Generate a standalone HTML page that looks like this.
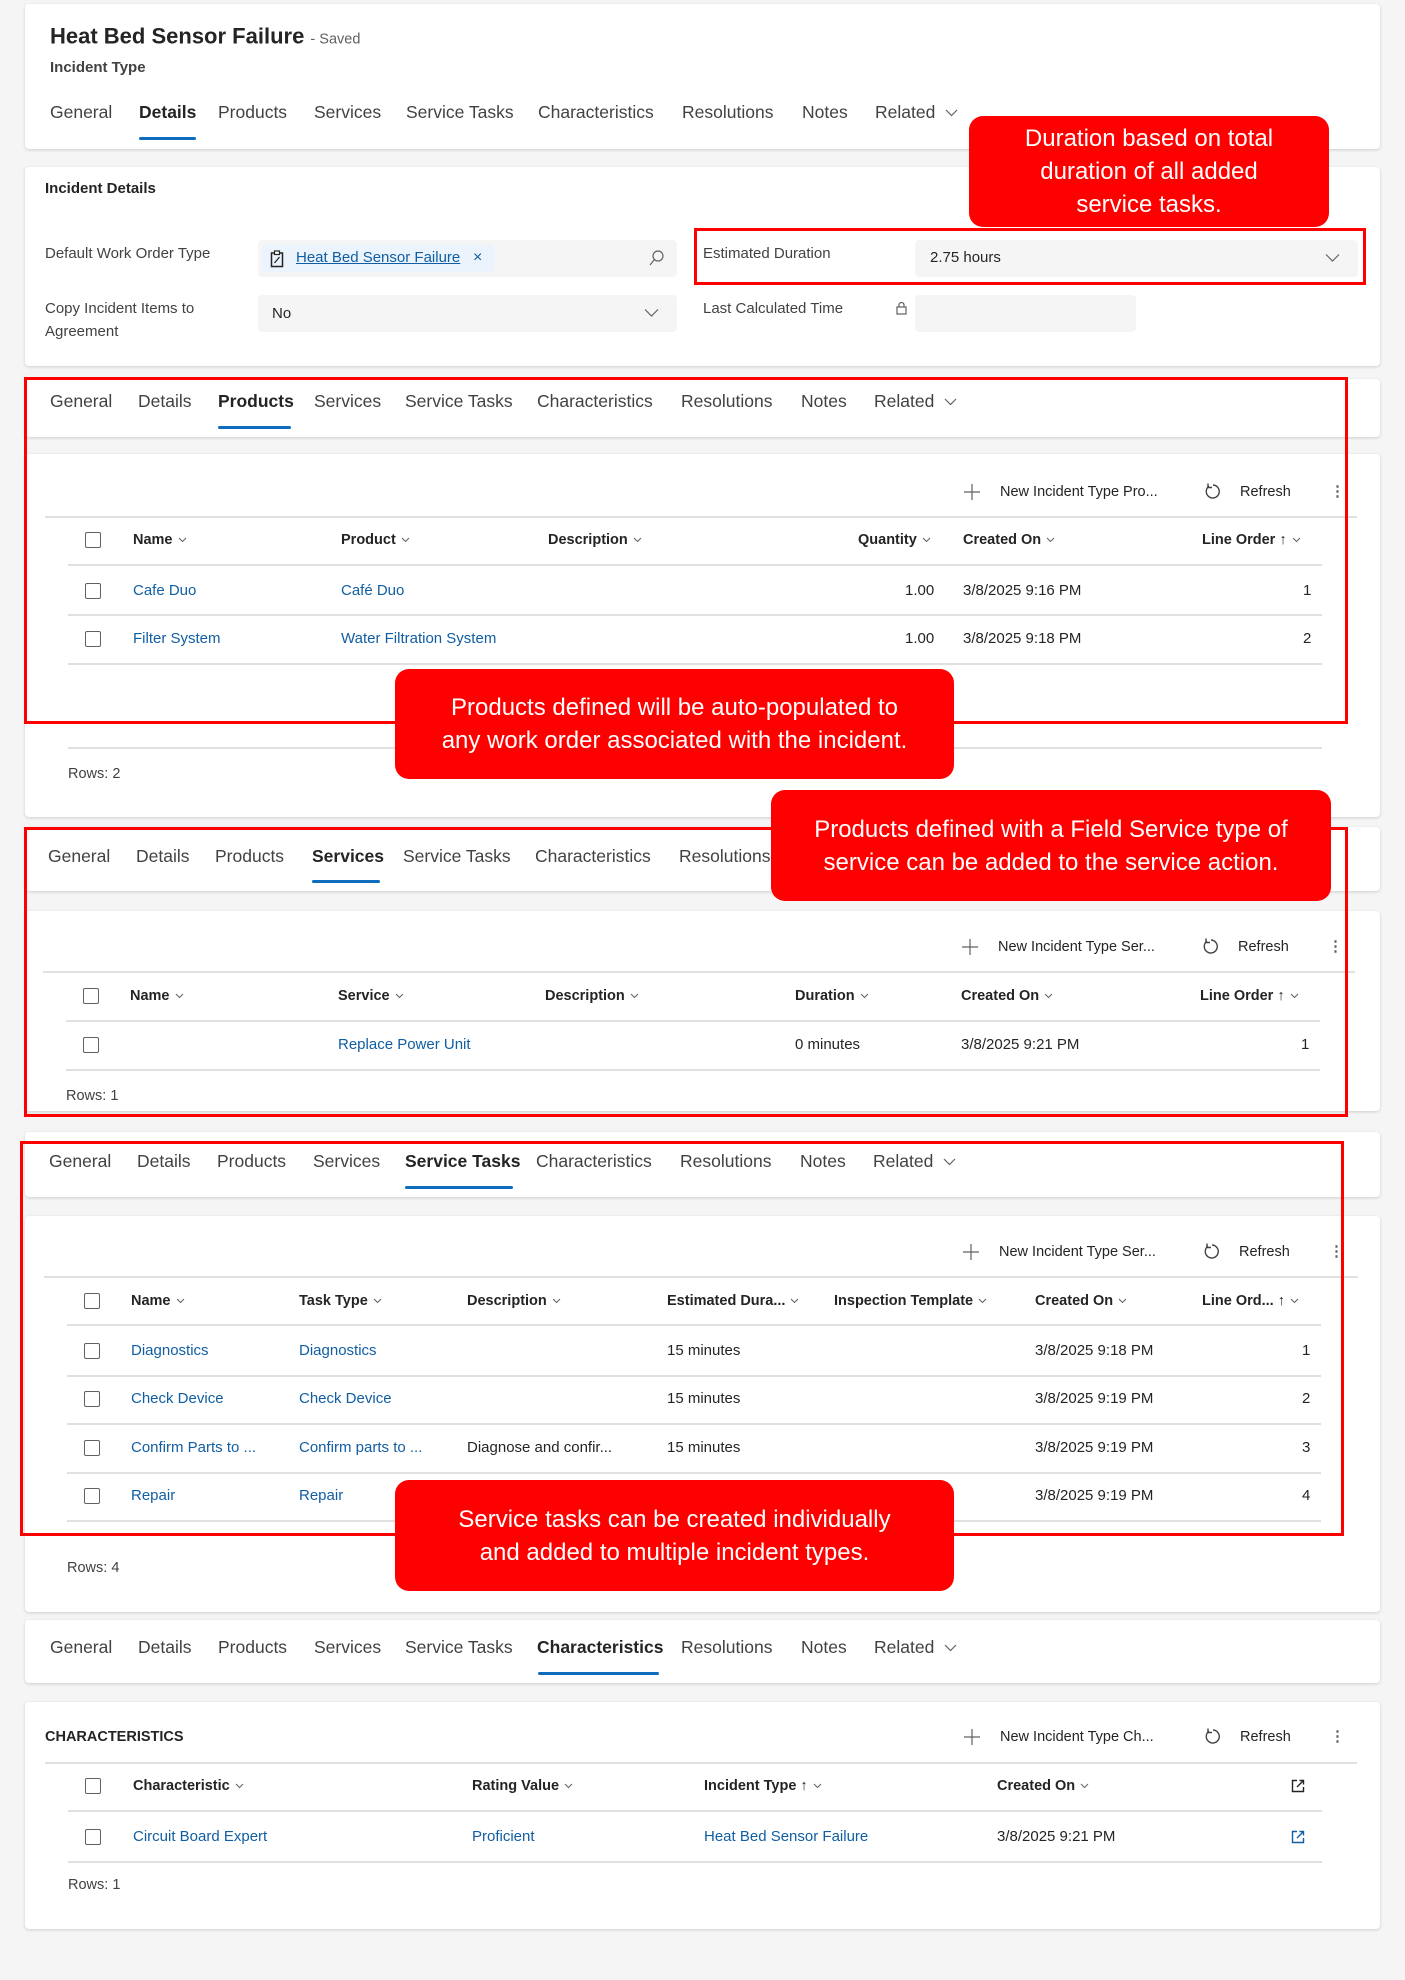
<!DOCTYPE html>
<html><head><meta charset="utf-8"><style>
*{margin:0;padding:0;box-sizing:border-box}
body{width:1405px;height:1980px;background:#f5f5f5;position:relative;font-family:"Liberation Sans",Arial,sans-serif;color:#242424;overflow:hidden}
.c{position:absolute;background:#fff;border-radius:4px;box-shadow:0 1px 3px rgba(0,0,0,.16)}
.t{position:absolute;white-space:nowrap;transform:translateY(-50%);font-size:15px;line-height:20px}
.tab{font-size:17.5px;color:#424242}
.act{font-weight:bold;color:#242424}
.ul{position:absolute;height:3px;background:#0f6cbd;border-radius:2px}
.h{font-weight:bold;font-size:14.5px}
.l{color:#115ea3}
.ln{position:absolute;height:1px;background:#e0e0e0}
.cb{position:absolute;width:16px;height:16px;border:1px solid #616161;border-radius:2px;transform:translateY(-50%)}
.rb{position:absolute;border:3px solid #f00}
.co{position:absolute;background:#f00;color:#fff;border-radius:14px;font-size:24px;line-height:33px;text-align:center;display:flex;flex-direction:column;justify-content:center}
.fb{position:absolute;background:#f5f5f5;border-radius:4px}
.cv{margin-left:5px;vertical-align:middle}
.small{font-size:14.5px}
</style></head><body>

<!-- Card 1 header -->
<div class="c" style="left:25px;top:4px;width:1355px;height:145px"></div>
<div class="t" style="left:50px;top:38px;font-size:22px;font-weight:bold;color:#242424">Heat Bed Sensor Failure <span style="font-size:14.5px;font-weight:normal;color:#616161">- Saved</span></div>
<div class="t" style="left:50px;top:68px;font-size:15px;font-weight:bold;color:#424242">Incident Type</div>

<div class="t tab" style="left:50px;top:112px">General</div>
<div class="t tab act" style="left:139px;top:112px">Details</div>
<div class="t tab" style="left:218px;top:112px">Products</div>
<div class="t tab" style="left:314px;top:112px">Services</div>
<div class="t tab" style="left:406px;top:112px">Service Tasks</div>
<div class="t tab" style="left:538px;top:112px">Characteristics</div>
<div class="t tab" style="left:682px;top:112px">Resolutions</div>
<div class="t tab" style="left:802px;top:112px">Notes</div>
<div class="t tab" style="left:875px;top:112px">Related <svg class="cv" width="13" height="8"><path d="M1 1l5.5 5.5L12 1" stroke="#616161" fill="none" stroke-width="1.2"/></svg></div>
<div class="ul" style="left:139px;top:137px;width:57px"></div>

<!-- Card 2 details -->
<div class="c" style="left:25px;top:167px;width:1355px;height:199px"></div>
<div class="t" style="left:45px;top:189px;font-size:15px;font-weight:bold">Incident Details</div>
<div class="t" style="left:45px;top:254px;color:#424242">Default Work Order Type</div>
<div class="fb" style="left:258px;top:240px;width:419px;height:37px"></div>
<div style="position:absolute;left:262px;top:245px;width:232px;height:27px;background:#ebf3fc;border-radius:3px"></div>
<svg style="position:absolute;left:270px;top:250px" width="14" height="18"><rect x="1.5" y="3" width="11" height="13.5" fill="none" stroke="#242424" stroke-width="1.5"/><rect x="4.5" y="1" width="5" height="3.5" fill="#fff" stroke="#242424" stroke-width="1.2"/><path d="M4.5 13l5-6" stroke="#242424" stroke-width="1.3"/></svg>
<div class="t l" style="left:296px;top:258px;text-decoration:underline">Heat Bed Sensor Failure</div>
<div class="t" style="left:473px;top:258px;color:#115ea3;font-size:16px">×</div>
<svg style="position:absolute;left:648px;top:249px" width="16" height="18"><circle cx="10" cy="7" r="5" fill="none" stroke="#616161" stroke-width="1.2"/><path d="M6.5 10.5L2 16" stroke="#616161" stroke-width="1.2"/></svg>

<div class="t" style="left:45px;top:309px;color:#424242">Copy Incident Items to</div>
<div class="t" style="left:45px;top:332px;color:#424242">Agreement</div>
<div class="fb" style="left:258px;top:295px;width:419px;height:37px"></div>
<div class="t" style="left:272px;top:314px">No</div>
<svg style="position:absolute;left:644px;top:308px" width="15" height="10"><path d="M1 1.5l6.5 6.5L14 1.5" stroke="#616161" fill="none" stroke-width="1.2"/></svg>

<div class="t" style="left:703px;top:254px;color:#424242">Estimated Duration</div>
<div class="fb" style="left:915px;top:240px;width:443px;height:37px"></div>
<div class="t" style="left:930px;top:258px">2.75 hours</div>
<svg style="position:absolute;left:1325px;top:253px" width="15" height="10"><path d="M1 1.5l6.5 6.5L14 1.5" stroke="#616161" fill="none" stroke-width="1.2"/></svg>
<div class="rb" style="left:694px;top:228px;width:672px;height:57px"></div>

<div class="t" style="left:703px;top:309px;color:#424242">Last Calculated Time</div>
<svg style="position:absolute;left:896px;top:301px" width="11" height="14"><rect x="1" y="6" width="9" height="7" fill="none" stroke="#616161" stroke-width="1.2"/><path d="M3 6V4a2.5 2.5 0 015 0v2" fill="none" stroke="#616161" stroke-width="1.2"/></svg>
<div class="fb" style="left:915px;top:295px;width:221px;height:37px"></div>

<div class="co" style="left:969px;top:116px;width:360px;height:111px"><div>Duration based on total</div><div>duration of all added</div><div>service tasks.</div></div>

<!-- Products tabs -->
<div class="c" style="left:25px;top:379px;width:1355px;height:58px"></div>
<div class="t tab" style="left:50px;top:401px">General</div>
<div class="t tab" style="left:138px;top:401px">Details</div>
<div class="t tab act" style="left:218px;top:401px">Products</div>
<div class="t tab" style="left:314px;top:401px">Services</div>
<div class="t tab" style="left:405px;top:401px">Service Tasks</div>
<div class="t tab" style="left:537px;top:401px">Characteristics</div>
<div class="t tab" style="left:681px;top:401px">Resolutions</div>
<div class="t tab" style="left:801px;top:401px">Notes</div>
<div class="t tab" style="left:874px;top:401px">Related <svg class="cv" width="13" height="8"><path d="M1 1l5.5 5.5L12 1" stroke="#616161" fill="none" stroke-width="1.2"/></svg></div>
<div class="ul" style="left:218px;top:426px;width:73px"></div>

<!-- Products grid -->
<div class="c" style="left:25px;top:454px;width:1355px;height:363px"></div>
<svg style="position:absolute;left:964px;top:484px" width="16" height="16"><path d="M8 0v16M0 8h16" stroke="#616161" stroke-width="1.2"/></svg>
<div class="t small" style="left:1000px;top:492px">New Incident Type Pro...</div>
<svg style="position:absolute;left:1204px;top:483px" width="17" height="17"><path d="M5 3.2A6.5 6.5 0 1 0 9 2" fill="none" stroke="#424242" stroke-width="1.4"/><path d="M4 0.5v4h4" fill="none" stroke="#424242" stroke-width="1.4"/></svg>
<div class="t small" style="left:1240px;top:492px">Refresh</div>
<div class="t" style="left:1330px;top:492px;font-weight:bold;color:#616161">⋮</div>
<div class="ln" style="left:45px;top:516px;width:1312px;height:2px"></div>
<div class="cb" style="left:85px;top:540px"></div>
<div class="t h" style="left:133px;top:540px">Name<svg class="cv" width="9" height="6"><path d="M1 1l3.5 3.5L8 1" stroke="#616161" fill="none"/></svg></div>
<div class="t h" style="left:341px;top:540px">Product<svg class="cv" width="9" height="6"><path d="M1 1l3.5 3.5L8 1" stroke="#616161" fill="none"/></svg></div>
<div class="t h" style="left:548px;top:540px">Description<svg class="cv" width="9" height="6"><path d="M1 1l3.5 3.5L8 1" stroke="#616161" fill="none"/></svg></div>
<div class="t h" style="left:858px;top:540px">Quantity<svg class="cv" width="9" height="6"><path d="M1 1l3.5 3.5L8 1" stroke="#616161" fill="none"/></svg></div>
<div class="t h" style="left:963px;top:540px">Created On<svg class="cv" width="9" height="6"><path d="M1 1l3.5 3.5L8 1" stroke="#616161" fill="none"/></svg></div>
<div class="t h" style="left:1202px;top:540px">Line Order <span style="font-weight:normal">↑</span><svg class="cv" width="9" height="6"><path d="M1 1l3.5 3.5L8 1" stroke="#616161" fill="none"/></svg></div>
<div class="ln" style="left:68px;top:564px;width:1254px;height:2px"></div>
<div class="cb" style="left:85px;top:591px"></div>
<div class="t l" style="left:133px;top:591px">Cafe Duo</div>
<div class="t l" style="left:341px;top:591px">Café Duo</div>
<div class="t" style="left:905px;top:591px">1.00</div>
<div class="t" style="left:963px;top:591px">3/8/2025 9:16 PM</div>
<div class="t" style="left:1303px;top:591px">1</div>
<div class="ln" style="left:68px;top:614px;width:1254px;height:2px"></div>
<div class="cb" style="left:85px;top:639px"></div>
<div class="t l" style="left:133px;top:639px">Filter System</div>
<div class="t l" style="left:341px;top:639px">Water Filtration System</div>
<div class="t" style="left:905px;top:639px">1.00</div>
<div class="t" style="left:963px;top:639px">3/8/2025 9:18 PM</div>
<div class="t" style="left:1303px;top:639px">2</div>
<div class="ln" style="left:68px;top:663px;width:1254px;height:2px"></div>
<div class="ln" style="left:68px;top:747px;width:1254px;height:2px"></div>
<div class="t small" style="left:68px;top:774px;color:#424242">Rows: 2</div>
<div class="rb" style="left:24px;top:377px;width:1324px;height:347px"></div>
<div class="co" style="left:395px;top:669px;width:559px;height:110px"><div>Products defined will be auto-populated to</div><div>any work order associated with the incident.</div></div>

<!-- Services tabs -->
<div class="c" style="left:25px;top:827px;width:1355px;height:64px"></div>
<div class="t tab" style="left:48px;top:856px">General</div>
<div class="t tab" style="left:136px;top:856px">Details</div>
<div class="t tab" style="left:215px;top:856px">Products</div>
<div class="t tab act" style="left:312px;top:856px">Services</div>
<div class="t tab" style="left:403px;top:856px">Service Tasks</div>
<div class="t tab" style="left:535px;top:856px">Characteristics</div>
<div class="t tab" style="left:679px;top:856px">Resolutions</div>
<div class="ul" style="left:312px;top:880px;width:68px"></div>

<!-- Services grid -->
<div class="c" style="left:25px;top:911px;width:1355px;height:200px"></div>
<svg style="position:absolute;left:962px;top:939px" width="16" height="16"><path d="M8 0v16M0 8h16" stroke="#616161" stroke-width="1.2"/></svg>
<div class="t small" style="left:998px;top:947px">New Incident Type Ser...</div>
<svg style="position:absolute;left:1202px;top:938px" width="17" height="17"><path d="M5 3.2A6.5 6.5 0 1 0 9 2" fill="none" stroke="#424242" stroke-width="1.4"/><path d="M4 0.5v4h4" fill="none" stroke="#424242" stroke-width="1.4"/></svg>
<div class="t small" style="left:1238px;top:947px">Refresh</div>
<div class="t" style="left:1328px;top:947px;font-weight:bold;color:#616161">⋮</div>
<div class="ln" style="left:43px;top:971px;width:1312px;height:2px"></div>
<div class="cb" style="left:83px;top:996px"></div>
<div class="t h" style="left:130px;top:996px">Name<svg class="cv" width="9" height="6"><path d="M1 1l3.5 3.5L8 1" stroke="#616161" fill="none"/></svg></div>
<div class="t h" style="left:338px;top:996px">Service<svg class="cv" width="9" height="6"><path d="M1 1l3.5 3.5L8 1" stroke="#616161" fill="none"/></svg></div>
<div class="t h" style="left:545px;top:996px">Description<svg class="cv" width="9" height="6"><path d="M1 1l3.5 3.5L8 1" stroke="#616161" fill="none"/></svg></div>
<div class="t h" style="left:795px;top:996px">Duration<svg class="cv" width="9" height="6"><path d="M1 1l3.5 3.5L8 1" stroke="#616161" fill="none"/></svg></div>
<div class="t h" style="left:961px;top:996px">Created On<svg class="cv" width="9" height="6"><path d="M1 1l3.5 3.5L8 1" stroke="#616161" fill="none"/></svg></div>
<div class="t h" style="left:1200px;top:996px">Line Order <span style="font-weight:normal">↑</span><svg class="cv" width="9" height="6"><path d="M1 1l3.5 3.5L8 1" stroke="#616161" fill="none"/></svg></div>
<div class="ln" style="left:66px;top:1020px;width:1254px;height:2px"></div>
<div class="cb" style="left:83px;top:1045px"></div>
<div class="t l" style="left:338px;top:1045px">Replace Power Unit</div>
<div class="t" style="left:795px;top:1045px">0 minutes</div>
<div class="t" style="left:961px;top:1045px">3/8/2025 9:21 PM</div>
<div class="t" style="left:1301px;top:1045px">1</div>
<div class="ln" style="left:66px;top:1069px;width:1254px;height:2px"></div>
<div class="t small" style="left:66px;top:1096px;color:#424242">Rows: 1</div>
<div class="rb" style="left:24px;top:827px;width:1324px;height:290px"></div>
<div class="co" style="left:771px;top:790px;width:560px;height:111px"><div>Products defined with a Field Service type of</div><div>service can be added to the service action.</div></div>

<!-- Service tasks tabs -->
<div class="c" style="left:25px;top:1132px;width:1355px;height:65px"></div>
<div class="t tab" style="left:49px;top:1161px">General</div>
<div class="t tab" style="left:137px;top:1161px">Details</div>
<div class="t tab" style="left:217px;top:1161px">Products</div>
<div class="t tab" style="left:313px;top:1161px">Services</div>
<div class="t tab act" style="left:405px;top:1161px">Service Tasks</div>
<div class="t tab" style="left:536px;top:1161px">Characteristics</div>
<div class="t tab" style="left:680px;top:1161px">Resolutions</div>
<div class="t tab" style="left:800px;top:1161px">Notes</div>
<div class="t tab" style="left:873px;top:1161px">Related <svg class="cv" width="13" height="8"><path d="M1 1l5.5 5.5L12 1" stroke="#616161" fill="none" stroke-width="1.2"/></svg></div>
<div class="ul" style="left:405px;top:1186px;width:108px"></div>

<!-- Service tasks grid -->
<div class="c" style="left:25px;top:1216px;width:1355px;height:396px"></div>
<svg style="position:absolute;left:963px;top:1244px" width="16" height="16"><path d="M8 0v16M0 8h16" stroke="#616161" stroke-width="1.2"/></svg>
<div class="t small" style="left:999px;top:1252px">New Incident Type Ser...</div>
<svg style="position:absolute;left:1203px;top:1243px" width="17" height="17"><path d="M5 3.2A6.5 6.5 0 1 0 9 2" fill="none" stroke="#424242" stroke-width="1.4"/><path d="M4 0.5v4h4" fill="none" stroke="#424242" stroke-width="1.4"/></svg>
<div class="t small" style="left:1239px;top:1252px">Refresh</div>
<div class="t" style="left:1329px;top:1252px;font-weight:bold;color:#616161">⋮</div>
<div class="ln" style="left:44px;top:1276px;width:1314px;height:2px"></div>
<div class="cb" style="left:84px;top:1301px"></div>
<div class="t h" style="left:131px;top:1301px">Name<svg class="cv" width="9" height="6"><path d="M1 1l3.5 3.5L8 1" stroke="#616161" fill="none"/></svg></div>
<div class="t h" style="left:299px;top:1301px">Task Type<svg class="cv" width="9" height="6"><path d="M1 1l3.5 3.5L8 1" stroke="#616161" fill="none"/></svg></div>
<div class="t h" style="left:467px;top:1301px">Description<svg class="cv" width="9" height="6"><path d="M1 1l3.5 3.5L8 1" stroke="#616161" fill="none"/></svg></div>
<div class="t h" style="left:667px;top:1301px">Estimated Dura...<svg class="cv" width="9" height="6"><path d="M1 1l3.5 3.5L8 1" stroke="#616161" fill="none"/></svg></div>
<div class="t h" style="left:834px;top:1301px">Inspection Template<svg class="cv" width="9" height="6"><path d="M1 1l3.5 3.5L8 1" stroke="#616161" fill="none"/></svg></div>
<div class="t h" style="left:1035px;top:1301px">Created On<svg class="cv" width="9" height="6"><path d="M1 1l3.5 3.5L8 1" stroke="#616161" fill="none"/></svg></div>
<div class="t h" style="left:1202px;top:1301px">Line Ord... <span style="font-weight:normal">↑</span><svg class="cv" width="9" height="6"><path d="M1 1l3.5 3.5L8 1" stroke="#616161" fill="none"/></svg></div>
<div class="ln" style="left:67px;top:1324px;width:1254px;height:2px"></div>

<div class="cb" style="left:84px;top:1351px"></div>
<div class="t l" style="left:131px;top:1351px">Diagnostics</div>
<div class="t l" style="left:299px;top:1351px">Diagnostics</div>
<div class="t" style="left:667px;top:1351px">15 minutes</div>
<div class="t" style="left:1035px;top:1351px">3/8/2025 9:18 PM</div>
<div class="t" style="left:1302px;top:1351px">1</div>
<div class="ln" style="left:67px;top:1375px;width:1254px;height:2px"></div>

<div class="cb" style="left:84px;top:1399px"></div>
<div class="t l" style="left:131px;top:1399px">Check Device</div>
<div class="t l" style="left:299px;top:1399px">Check Device</div>
<div class="t" style="left:667px;top:1399px">15 minutes</div>
<div class="t" style="left:1035px;top:1399px">3/8/2025 9:19 PM</div>
<div class="t" style="left:1302px;top:1399px">2</div>
<div class="ln" style="left:67px;top:1423px;width:1254px;height:2px"></div>

<div class="cb" style="left:84px;top:1448px"></div>
<div class="t l" style="left:131px;top:1448px">Confirm Parts to ...</div>
<div class="t l" style="left:299px;top:1448px">Confirm parts to ...</div>
<div class="t" style="left:467px;top:1448px">Diagnose and confir...</div>
<div class="t" style="left:667px;top:1448px">15 minutes</div>
<div class="t" style="left:1035px;top:1448px">3/8/2025 9:19 PM</div>
<div class="t" style="left:1302px;top:1448px">3</div>
<div class="ln" style="left:67px;top:1472px;width:1254px;height:2px"></div>

<div class="cb" style="left:84px;top:1496px"></div>
<div class="t l" style="left:131px;top:1496px">Repair</div>
<div class="t l" style="left:299px;top:1496px">Repair</div>
<div class="t" style="left:1035px;top:1496px">3/8/2025 9:19 PM</div>
<div class="t" style="left:1302px;top:1496px">4</div>
<div class="ln" style="left:67px;top:1520px;width:1254px;height:2px"></div>
<div class="t small" style="left:67px;top:1568px;color:#424242">Rows: 4</div>
<div class="rb" style="left:20px;top:1141px;width:1324px;height:395px"></div>
<div class="co" style="left:395px;top:1480px;width:559px;height:111px"><div>Service tasks can be created individually</div><div>and added to multiple incident types.</div></div>

<!-- Characteristics tabs -->
<div class="c" style="left:25px;top:1620px;width:1355px;height:63px"></div>
<div class="t tab" style="left:50px;top:1647px">General</div>
<div class="t tab" style="left:138px;top:1647px">Details</div>
<div class="t tab" style="left:218px;top:1647px">Products</div>
<div class="t tab" style="left:314px;top:1647px">Services</div>
<div class="t tab" style="left:405px;top:1647px">Service Tasks</div>
<div class="t tab act" style="left:537px;top:1647px">Characteristics</div>
<div class="t tab" style="left:681px;top:1647px">Resolutions</div>
<div class="t tab" style="left:801px;top:1647px">Notes</div>
<div class="t tab" style="left:874px;top:1647px">Related <svg class="cv" width="13" height="8"><path d="M1 1l5.5 5.5L12 1" stroke="#616161" fill="none" stroke-width="1.2"/></svg></div>
<div class="ul" style="left:538px;top:1672px;width:121px"></div>

<!-- Characteristics grid -->
<div class="c" style="left:25px;top:1702px;width:1355px;height:227px"></div>
<div class="t" style="left:45px;top:1737px;font-weight:bold;font-size:14.5px">CHARACTERISTICS</div>
<svg style="position:absolute;left:964px;top:1729px" width="16" height="16"><path d="M8 0v16M0 8h16" stroke="#616161" stroke-width="1.2"/></svg>
<div class="t small" style="left:1000px;top:1737px">New Incident Type Ch...</div>
<svg style="position:absolute;left:1204px;top:1728px" width="17" height="17"><path d="M5 3.2A6.5 6.5 0 1 0 9 2" fill="none" stroke="#424242" stroke-width="1.4"/><path d="M4 0.5v4h4" fill="none" stroke="#424242" stroke-width="1.4"/></svg>
<div class="t small" style="left:1240px;top:1737px">Refresh</div>
<div class="t" style="left:1330px;top:1737px;font-weight:bold;color:#616161">⋮</div>
<div class="ln" style="left:45px;top:1762px;width:1312px;height:2px"></div>
<div class="cb" style="left:85px;top:1786px"></div>
<div class="t h" style="left:133px;top:1786px">Characteristic<svg class="cv" width="9" height="6"><path d="M1 1l3.5 3.5L8 1" stroke="#616161" fill="none"/></svg></div>
<div class="t h" style="left:472px;top:1786px">Rating Value<svg class="cv" width="9" height="6"><path d="M1 1l3.5 3.5L8 1" stroke="#616161" fill="none"/></svg></div>
<div class="t h" style="left:704px;top:1786px">Incident Type <span style="font-weight:normal">↑</span><svg class="cv" width="9" height="6"><path d="M1 1l3.5 3.5L8 1" stroke="#616161" fill="none"/></svg></div>
<div class="t h" style="left:997px;top:1786px">Created On<svg class="cv" width="9" height="6"><path d="M1 1l3.5 3.5L8 1" stroke="#616161" fill="none"/></svg></div>
<svg style="position:absolute;left:1291px;top:1779px" width="14" height="14"><path d="M6 1.5H1.5v11h11V8" fill="none" stroke="#242424" stroke-width="1.4"/><path d="M6 8l6.5-6.5M8.5 1.5h4v4" fill="none" stroke="#242424" stroke-width="1.4"/></svg>
<div class="ln" style="left:68px;top:1810px;width:1254px;height:2px"></div>
<div class="cb" style="left:85px;top:1837px"></div>
<div class="t l" style="left:133px;top:1837px">Circuit Board Expert</div>
<div class="t l" style="left:472px;top:1837px">Proficient</div>
<div class="t l" style="left:704px;top:1837px">Heat Bed Sensor Failure</div>
<div class="t" style="left:997px;top:1837px">3/8/2025 9:21 PM</div>
<svg style="position:absolute;left:1291px;top:1830px" width="14" height="14"><path d="M6 1.5H1.5v11h11V8" fill="none" stroke="#115ea3" stroke-width="1.4"/><path d="M6 8l6.5-6.5M8.5 1.5h4v4" fill="none" stroke="#115ea3" stroke-width="1.4"/></svg>
<div class="ln" style="left:68px;top:1861px;width:1254px;height:2px"></div>
<div class="t small" style="left:68px;top:1885px;color:#424242">Rows: 1</div>

</body></html>
